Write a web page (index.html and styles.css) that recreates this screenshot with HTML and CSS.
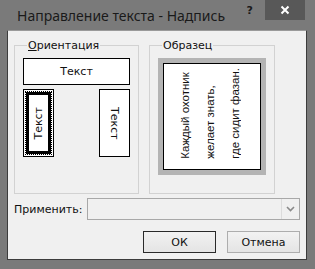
FILE: index.html
```html
<!DOCTYPE html>
<html lang="ru">
<head>
    <meta charset="UTF-8">
    <title>Направление текста - Надпись</title>
    <link rel="stylesheet" href="styles.css">
</head>
<body>
    <div class="window">
        <div class="titlebar">
            <span class="title">Направление текста - Надпись</span>
            <span class="help">?</span>
            <span class="close">
                <svg width="10" height="10" viewBox="0 0 10 10">
                    <path d="M1.5 1.5 L8.5 8.5 M8.5 1.5 L1.5 8.5" stroke="#fff" stroke-width="2" fill="none"/>
                </svg>
            </span>
        </div>
        <div class="client">
            <div class="groups">
                <fieldset class="group orient">
                    <legend><u>О</u>риентация</legend>
                    <div class="box box-h">Текст</div>
                    <div class="orient-row">
                        <div class="box box-v selected"><span class="up">Текст</span></div>
                        <div class="box box-v"><span class="down">Текст</span></div>
                    </div>
                </fieldset>
                <fieldset class="group sample">
                    <legend>Образец</legend>
                    <div class="sample-frame">
                        <div class="sample-page">
                            <div class="sample-text">Каждый охотник<br>желает знать,<br>где сидит фазан.</div>
                        </div>
                    </div>
                </fieldset>
            </div>
            <div class="apply-row">
                <span class="apply-label">Применить:</span>
                <div class="combo">
                    <div class="combo-btn">
                        <svg width="9" height="6" viewBox="0 0 9 6">
                            <path d="M1 1 L4.5 4.5 L8 1" stroke="#8a8a8a" stroke-width="1.6" fill="none"/>
                        </svg>
                    </div>
                </div>
            </div>
            <div class="buttons">
                <button class="btn default">ОК</button>
                <button class="btn">Отмена</button>
            </div>
        </div>
    </div>
</body>
</html>
```

FILE: styles.css
```css
body {
    margin: 0;
    background-color: #7a7a7a;
}

.window {
    width: 315px;
    height: 269px;
    background-color: #7a7a7a;
    display: flex;
    flex-direction: column;
    font-family: 'DejaVu Sans', sans-serif;
    font-size: 11px;
    color: #111;
}

.titlebar {
    height: 30px;
    display: flex;
    align-items: flex-start;
}

.title {
    flex: 1;
    padding: 6px 0 0 17px;
    font-family: 'Noto Sans', sans-serif;
    font-size: 14px;
    color: #1a1a1a;
}

.help {
    margin-top: 4px;
    font-weight: bold;
    font-size: 11px;
    color: #1a1a1a;
}

.close {
    width: 40px;
    height: 20px;
    margin: 0 10px 0 12px;
    background-color: #585858;
    display: flex;
    justify-content: center;
    align-items: center;
}

.client {
    flex: 1;
    margin: 0 8px 9px 7px;
    background-color: #f0f0f0;
    border: 1px solid #3c3c3c;
    border-top-color: #9a9a9a;
    display: flex;
    flex-direction: column;
    padding: 0 6px;
}

.groups {
    display: flex;
    gap: 10px;
    margin-top: 8px;
}

.group {
    margin: 0;
    padding: 6px 8px 0 8px;
    border: 1px solid #d2d2d2;
    height: 155px;
    box-sizing: border-box;
}

.group legend {
    padding: 0 1px;
    margin-left: 4px;
}

.orient {
    width: 125px;
}

.sample {
    width: 124px;
}

.box {
    background-color: #fff;
    border: 1px solid #000;
    box-sizing: border-box;
    display: flex;
    justify-content: center;
    align-items: center;
}

.box-h {
    width: 107px;
    height: 27px;
}

.orient-row {
    display: flex;
    justify-content: space-between;
    margin-top: 4px;
}

.box-v {
    width: 31px;
    height: 68px;
}

.box-v.selected {
    width: 25px;
    height: 62px;
    margin: 3px;
    border: 3px solid #000;
    outline: 1px dotted #000;
    box-shadow: 0 0 0 2px #fff, 0 0 0 3px #000;
}

.up {
    writing-mode: vertical-rl;
    transform: rotate(180deg);
}

.down {
    writing-mode: vertical-rl;
}

.sample-frame {
    width: 108px;
    height: 117px;
    box-sizing: border-box;
    padding: 5px;
    background-color: #b4b4b4;
}

.sample-page {
    height: 100%;
    box-sizing: border-box;
    background-color: #fff;
    border: 1px solid #000;
    display: flex;
    align-items: flex-end;
}

.sample-text {
    writing-mode: vertical-rl;
    transform: rotate(180deg);
    white-space: nowrap;
    font-family: 'Liberation Sans', Arial, sans-serif;
    font-size: 11.5px;
    line-height: 25px;
    margin: 0 0 10px 9px;
}

.apply-row {
    display: flex;
    align-items: center;
    margin-top: 4px;
}

.apply-label {
    width: 73px;
}

.combo {
    width: 214px;
    height: 22px;
    box-sizing: border-box;
    border: 1px solid #a8a8a8;
    background-color: #f0f0f0;
    display: flex;
    justify-content: flex-end;
}

.combo-btn {
    width: 17px;
    border-left: 1px solid #dcdcdc;
    display: flex;
    justify-content: center;
    align-items: center;
}

.buttons {
    display: flex;
    justify-content: flex-end;
    gap: 11px;
    margin-top: 11px;
}

.btn {
    width: 73px;
    height: 22px;
    font-family: 'DejaVu Sans', sans-serif;
    font-size: 11px;
    color: #111;
    background: linear-gradient(#f2f2f2, #e4e4e4);
    border: 1px solid #adadad;
    padding: 0;
}

.btn.default {
    border-color: #2a2a2a;
}
```
